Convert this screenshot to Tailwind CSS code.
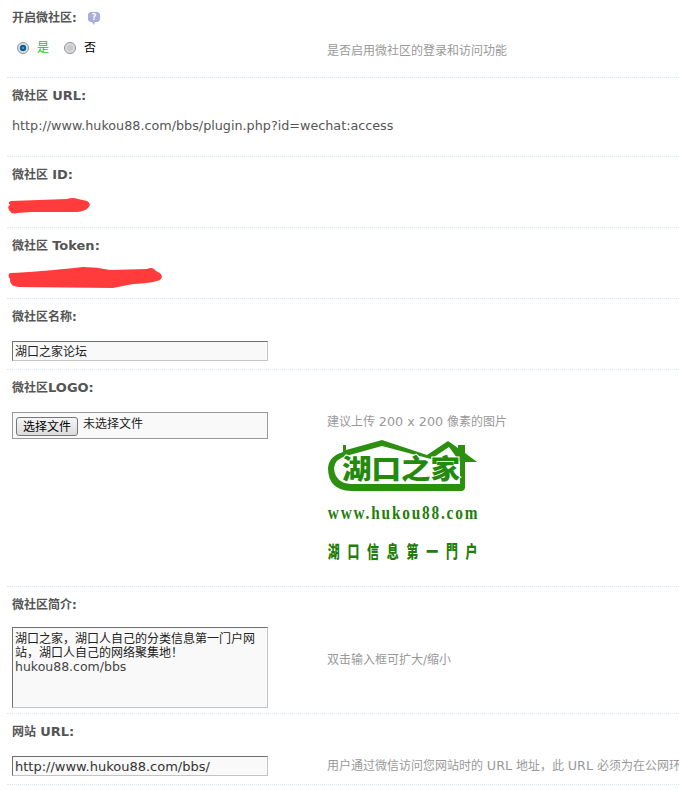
<!DOCTYPE html>
<html lang="zh-CN">
<head>
  <meta charset="UTF-8" />
  <title>微社区设置</title>
  <script src="https://cdn.jsdelivr.net/npm/@tailwindcss/browser@4"></script>
</head>
<body class="bg-white overflow-hidden text-[12px] leading-[15px] text-[#444] font-['DejaVu_Sans','Noto_Sans_CJK_SC',sans-serif]">
<div class="w-[679px] h-[790px] overflow-hidden pl-[7px]">

  <!-- 开启微社区 -->
  <div class="h-[78px] border-b border-dotted border-[#dbe6f0] pl-[5px] pt-[8px]">
    <div class="flex items-center gap-[10px] h-[20px] font-bold text-[#555]">
      <span>开启微社区:</span>
      <svg width="14" height="15" viewBox="0 0 14 15"><path d="M3 1h8l2 2v6l-2 2H8l-1 3-2-3H3L1 9V3z" fill="#a8aedb"/><text x="7" y="9" font-size="8" font-weight="bold" fill="#fff" text-anchor="middle">?</text></svg>
    </div>
    <div class="flex mt-[9px]">
      <div class="w-[315px] flex items-center pl-[5px] h-[24px] mt-[-1px]">
        <svg width="12" height="12" viewBox="0 0 12 12"><circle cx="6" cy="6" r="5.500" fill="#e3e3e3" stroke="#8d9096"/><circle cx="6" cy="6" r="3.200" fill="#0d5f96"/><circle cx="6" cy="6" r="1.200" fill="#3f9bd3"/></svg>
        <span class="ml-[8px] text-[#11c511]">是</span>
        <svg class="ml-[15px]" width="12" height="12" viewBox="0 0 12 12"><circle cx="6" cy="6" r="5.500" fill="#dcdcdc" stroke="#8d9096"/><circle cx="6" cy="6" r="3" fill="#c9c9c9"/></svg>
        <span class="ml-[8px] text-black">否</span>
      </div>
      <div class="text-[#999] pt-[7px] whitespace-nowrap">是否启用微社区的登录和访问功能</div>
    </div>
  </div>

  <!-- 微社区 URL -->
  <div class="h-[79px] border-b border-dotted border-[#dbe6f0] pl-[5px] pt-[10px]">
    <div class="font-bold text-[#555]">微社区 <span class="text-[13px]">URL:</span></div>
    <div class="mt-[14px] text-[#555] text-[12.750px] whitespace-nowrap">http://www.hukou88.com/bbs/plugin.php?id=wechat:access</div>
  </div>

  <!-- 微社区 ID -->
  <div class="h-[71px] border-b border-dotted border-[#dbe6f0] pl-[5px] pt-[10px]">
    <div class="font-bold text-[#555]">微社区 <span class="text-[13px]">ID:</span></div>
    <svg class="ml-[-5px] mt-[9px]" width="90" height="24" viewBox="0 0 90 24"><path d="M4 9L60 7Q66 5 71 7L80 9Q85 12 81 16Q78 19 70 20L25 20L10 21Q5 23 2 18Q0 14 3 13Q0 10 4 9Z" fill="#ff3b3b"/></svg>
  </div>

  <!-- 微社区 Token -->
  <div class="h-[71px] border-b border-dotted border-[#dbe6f0] pl-[5px] pt-[10px]">
    <div class="font-bold text-[#555]">微社区 <span class="text-[13px]">Token:</span></div>
    <svg class="ml-[-5px] mt-[6px]" width="160" height="30" viewBox="0 0 160 30"><path d="M3 13Q30 12 76 7Q90 7 103 10L140 9Q146 6 149 11Q157 14 154 19Q150 23 126 24L106 28L12 27Q2 26 3 19Q0 15 3 13Z" fill="#ff3b3b"/></svg>
  </div>

  <!-- 微社区名称 -->
  <div class="h-[71px] border-b border-dotted border-[#dbe6f0] pl-[5px] pt-[11px]">
    <div class="font-bold text-[#555]">微社区名称:</div>
    <div class="mt-[16px] w-[256px] h-[20px] bg-[#f9f9f9] border border-t-[#6f6f6f] border-l-[#6f6f6f] border-r-[#c4c4c4] border-b-[#c4c4c4] pl-[2px] leading-[21px] text-[#222]">湖口之家论坛</div>
  </div>

  <!-- 微社区LOGO -->
  <div class="h-[217px] border-b border-dotted border-[#dbe6f0] pl-[5px] pt-[10px]">
    <div class="font-bold text-[#555]">微社区<span class="text-[13px]">LOGO:</span></div>
    <div class="flex mt-[16px]">
      <div class="w-[315px] shrink-0">
        <div class="w-[256px] h-[27px] bg-[#f9f9f9] border border-[#999] flex items-center pl-[3px] text-[#222]">
          <span class="h-[19px] w-[62px] text-center leading-[19px] rounded-[3px] border border-[#777] bg-gradient-to-b from-[#f6f6f6] to-[#dcdcdc] text-black mt-[2px]">选择文件</span>
          <span class="ml-[5px] mb-[3px]">未选择文件</span>
        </div>
      </div>
      <div>
        <div class="text-[#999] pt-[2px] whitespace-nowrap">建议上传 <span class="text-[12.750px]">200 x 200</span> 像素的图片</div>
        <svg class="mt-[8px] block" width="152" height="128" viewBox="0 0 152 128">
          <path fill-rule="evenodd" d="M16 14L16 7L19 7L19 12L55 2L100 17L121 3L131 10L131 7L138 7L138 15L150 24L138 24L138 49Q138 53 134 53L24 53Q1 52 1 30Q2 18 16 14ZM19 18Q8 21 7 30Q8 45 24 46L133 46L133 24L122 9L104 21L100 20L55 8Z" fill="#2d8f10"/>
          <text x="15" y="41" font-size="27" font-weight="900" fill="#238a0c" stroke="#fff" stroke-width="2" paint-order="stroke" textLength="118" lengthAdjust="spacingAndGlyphs" font-family="'Noto Sans CJK SC',sans-serif">湖口之家</text>
          <text transform="scale(0.85 1)" x="1" y="81" font-size="18" font-weight="bold" fill="#1f7d0a" textLength="176" font-family="'Liberation Serif',serif">www.hukou88.com</text>
          <text transform="scale(0.7 1)" x="1" y="120" font-size="17" font-weight="900" fill="#1f7d0a" textLength="214" font-family="'Noto Sans CJK TC',sans-serif">湖口信息第一門户</text>
        </svg>
      </div>
    </div>
  </div>

  <!-- 微社区简介 -->
  <div class="h-[127px] border-b border-dotted border-[#dbe6f0] pl-[5px] pt-[11px]">
    <div class="font-bold text-[#555]">微社区简介:</div>
    <div class="flex mt-[14px]">
      <div class="w-[315px] shrink-0">
        <div class="w-[256px] h-[81px] bg-[#f9f9f9] border border-t-[#6f6f6f] border-l-[#6f6f6f] border-r-[#c4c4c4] border-b-[#c4c4c4] px-[2px] pt-[4px] leading-[14px] text-[#222]">湖口之家&#65292;湖口人自己的分类信息第一门户网站&#65292;湖口人自己的网络聚集地&#65281;<br /><span class="text-[12.500px] text-[#444]">hukou88.com/bbs</span></div>
      </div>
      <div class="text-[#999] pt-[26px] whitespace-nowrap">双击输入框可扩大/缩小</div>
    </div>
  </div>

  <!-- 网站 URL -->
  <div class="h-[71px] border-b border-dotted border-[#dbe6f0] pl-[5px] pt-[10px]">
    <div class="font-bold text-[#555]">网站 <span class="text-[13px]">URL:</span></div>
    <div class="flex mt-[16px]">
      <div class="w-[315px] shrink-0">
        <div class="w-[256px] h-[20px] bg-[#f9f9f9] border border-t-[#6f6f6f] border-l-[#6f6f6f] border-r-[#c4c4c4] border-b-[#c4c4c4] pl-[2px] leading-[19px] text-[13px] text-[#333]">http://www.hukou88.com/bbs/</div>
      </div>
      <div class="text-[#999] pt-[2px] whitespace-nowrap">用户通过微信访问您网站时的 <span class="text-[12.750px]">URL</span> 地址&#65292;此 <span class="text-[12.750px]">URL</span> 必须为在公网环境下可访问</div>
    </div>
  </div>

</div>
</body>
</html>
